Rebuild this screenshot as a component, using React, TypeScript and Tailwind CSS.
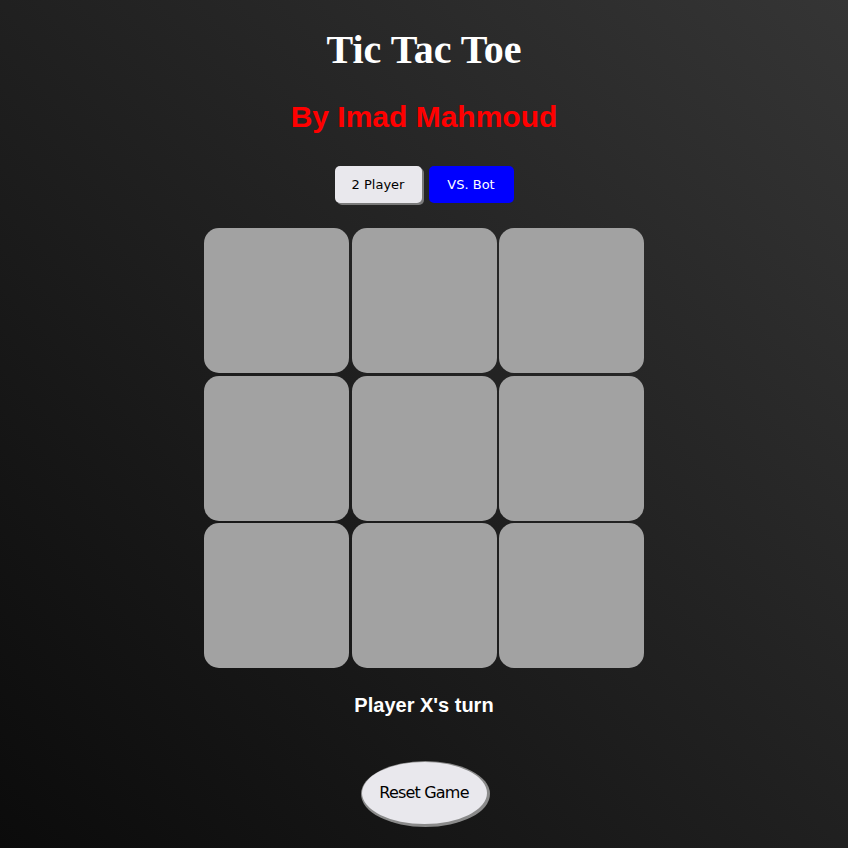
export default function App() {
  const cells = Array.from({ length: 9 });
  return (
    <div className="min-h-[848px] w-full bg-[linear-gradient(45deg,#0b0b0b,#353535)] flex flex-col items-center font-['Liberation_Sans',Arial,sans-serif]">
      <h1 className="mt-[26px] text-[40px] leading-[48px] font-bold text-white font-['Liberation_Serif','Times_New_Roman',serif]">
        Tic Tac Toe
      </h1>
      <h2 className="mt-[26px] text-[30px] leading-[34px] font-bold text-[#ff0000]">By Imad Mahmoud</h2>
      <div className="mt-[32px] flex gap-[7px] font-['DejaVu_Sans',Tahoma,sans-serif] text-[13px]">
        <button className="w-[87px] h-[37px] rounded-[5px] bg-[#e9e8ed] text-black shadow-[2px_2px_0_#7a7a7a]">
          2 Player
        </button>
        <button className="w-[85px] h-[37px] rounded-[5px] bg-[#0000ff] text-white">VS. Bot</button>
      </div>
      <div className="mt-[25px] grid grid-cols-[145px_145px_145px] gap-x-[2.5px] gap-y-[2.5px]">
        {cells.map((_, i) => (
          <div key={i} className="h-[145px] rounded-[15px] bg-[#a2a2a2]" />
        ))}
      </div>
      <p className="mt-[25px] text-[20px] leading-[24px] font-bold text-white">Player X's turn</p>
      <button className="mt-[45px] w-[125px] h-[62px] rounded-[50%] bg-[#e9e8ed] text-black text-[16px] font-['DejaVu_Sans',Tahoma,sans-serif] shadow-[1px_1px_0_2px_#8a8a8a] tracking-[-0.8px]">
        Reset Game
      </button>
    </div>
  );
}
